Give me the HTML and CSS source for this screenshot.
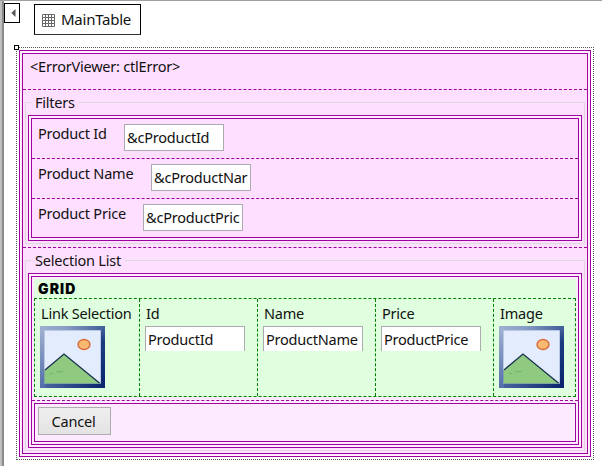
FILE: index.html
```html
<!DOCTYPE html>
<html lang="en">
<head>
<meta charset="utf-8">
<title>MainTable</title>
<link rel="stylesheet" href="styles.css">
</head>
<body>
<svg class="defs" width="0" height="0" aria-hidden="true">
  <defs>
    <linearGradient id="frame" x1="0" y1="0" x2="1" y2="0"><stop offset="0" stop-color="#9eb0d0"/><stop offset=".4" stop-color="#8a9dc6"/><stop offset="1" stop-color="#3d5c98"/></linearGradient>
    <linearGradient id="side" x1="0" y1="0" x2="0" y2="1"><stop offset="0" stop-color="#9eb0d0"/><stop offset="1" stop-color="#536ea8"/></linearGradient>
    <linearGradient id="base" x1="0" y1="0" x2="1" y2="0"><stop offset="0" stop-color="#4e69a2"/><stop offset="1" stop-color="#07246c"/></linearGradient>
    <linearGradient id="right" x1="0" y1="0" x2="0" y2="1"><stop offset="0" stop-color="#3d5c98"/><stop offset=".2" stop-color="#1c3c82"/><stop offset="1" stop-color="#07246c"/></linearGradient>
    <symbol id="picture" viewBox="0 0 65 62">
      <path fill="url(#frame)" d="M0 0h65v5H0z"/>
      <path fill="url(#right)" d="M60 4h5v58h-5z"/>
      <path fill="url(#base)" d="M0 57h65v5H0z"/>
      <path fill="url(#side)" d="M0 3h5v59H0z"/>
      <path fill="#e3ecfc" stroke="#b9c9e4" d="M4.500 4.500h56v53h-56z"/>
      <path fill="#8fca80" d="M5 44 24 28 60 57H5z"/>
      <path fill="none" stroke="#18304f" stroke-width="1.300" d="M5 44 24 28 60 57.500"/>
      <path fill="none" stroke="#7fa5a0" d="M4.500 44v13.500h55"/>
      <path fill="none" stroke="#76b767" stroke-width="1.200" d="m10 48 3-1m3-1 7-.6"/>
      <ellipse cx="44" cy="18.500" rx="6" ry="5" fill="#f9b971" stroke="#d96b3c" stroke-width="1.400"/>
    </symbol>
  </defs>
</svg>
<div class="editor">
  <header class="toolbar">
    <div class="collapse"><svg width="5" height="8" viewBox="0 0 5 8"><path fill="#555" d="M4.500 0v8L.3 4z"/></svg></div>
    <div class="tab">
      <svg width="13" height="13" viewBox="0 0 13 13"><path fill="none" stroke="#686868" d="M.5 .5h12v12H.5zM3.500 0v13M6.500 0v13M9.500 0v13M0 3.500h13M0 6.500h13M0 9.500h13"/></svg>
      <span>MainTable</span>
    </div>
  </header>
  <main class="selection">
    <i class="handle"></i>
    <div class="frame"><div class="table">
      <div class="error">&lt;ErrorViewer: ctlError&gt;</div>
      <section class="group filters">
        <div class="legend"><span>Filters</span></div>
        <div class="frame"><div class="table">
          <div class="field"><label class="w-id">Product Id</label><div class="input">&amp;cProductId</div></div>
          <div class="field"><label class="w-name">Product Name</label><div class="input">&amp;cProductNar</div></div>
          <div class="field"><label class="w-price">Product Price</label><div class="input">&amp;cProductPric</div></div>
        </div></div>
      </section>
      <section class="group list">
        <div class="legend"><span>Selection List</span></div>
        <div class="frame"><div class="table pale">
          <div class="gridwrap">
            <div class="gridtitle">GRID</div>
            <div class="grid">
              <div class="col first"><span class="head">Link Selection</span><svg class="pic" width="65" height="62"><use href="#picture"/></svg></div>
              <div class="col"><span class="head">Id</span><div class="input cut">ProductId</div></div>
              <div class="col"><span class="head">Name</span><div class="input cut">ProductName</div></div>
              <div class="col"><span class="head">Price</span><div class="input cut">ProductPrice</div></div>
              <div class="col"><span class="head">Image</span><svg class="pic" width="65" height="62"><use href="#picture"/></svg></div>
            </div>
          </div>
          <div class="actions"><div class="actionbox"><div class="button">Cancel</div></div></div>
        </div></div>
      </section>
    </div></div>
  </main>
</div>
</body>
</html>
```
FILE: styles.css
```css
* { box-sizing: border-box; }
body {
  margin: 0;
  background: #fff;
  color: #111;
  font: 14.500px/18px "Noto Sans", "Open Sans", sans-serif;
  letter-spacing: -0.22px;
  white-space: nowrap;
  overflow: hidden;
}
.defs { position: absolute; }
.editor {
  width: 602px;
  height: 466px;
  border-top: 1px solid #a0a0a0;
  background: linear-gradient(90deg, #c0bfbe 0 2px, #8c8a88 2px 4px, #fff 4px);
}
.toolbar { display: flex; align-items: flex-start; height: 46px; padding: 2px 0 0 4px; }
.collapse {
  display: flex; align-items: center; justify-content: center;
  width: 16px; height: 20px; border: 1px solid #000; padding-left: 2px;
}
.tab {
  display: flex; align-items: center; gap: 6px;
  width: 107px; height: 31px; margin: 1px 0 0 14px; padding: 0 0 2px 7px;
  border: 1px solid #000; border-bottom-color: #333;
  font-size: 15px; letter-spacing: -0.25px;
}
.tab svg { margin-top: 4px; }
.selection {
  position: relative;
  width: 578px; height: 413px; margin-left: 16px; padding: 2px;
  border: 1px dotted #555;
}
.handle {
  position: absolute; left: -3px; top: -3px;
  width: 5px; height: 5px; border: 1px solid #000; background: #fff;
}
.frame { border: 1px solid #a000a0; padding: 2px; background: #ffeffe; }
.table { border: 1px solid #a000a0; background: #ffdfff; }
.pale { background: #fdeaff; }
.error {
  height: 36px; padding: 3px 7px; border-bottom: 1px dashed #a000a0;
}
.group { position: relative; padding: 25px 5px 6px; height: 158px; border-bottom: 1px dashed #a000a0; }
.group::before {
  content: ""; position: absolute; inset: 12px 2px 3px; border: 1px solid #dfd8df;
}
.list { height: 205px; padding-bottom: 5px; border-bottom: 0; }
.list::before { bottom: 2px; }
.legend { position: absolute; left: 9px; top: 3px; padding: 0 3px; background: #ffdfff; }
.field { display: flex; height: 40px; padding: 5px 6px; border-bottom: 1px dashed #a000a0; }
.field:last-child { height: 38px; border-bottom: 0; }
.w-id { width: 86px; }
.w-name { width: 113px; }
.w-price { width: 105px; }
.input {
  width: 100px; height: 27px; padding: 3px 2px;
  border: 1px solid #aaaaaf; background: #fff; overflow: hidden;
}
.gridwrap { margin: 2px 2px 0; background: #dfffdf; }
.gridtitle {
  height: 19px; padding-left: 4px;
  font: 900 14px/20px "Inter", sans-serif; letter-spacing: 1.1px; color: #000;
}
.grid { display: flex; height: 99px; border: 1px dashed #008000; }
.col { width: 118px; padding: 5px 5px 0; border-right: 1px dashed #008000; }
.col:first-child { width: 105px; }
.col:last-child { width: auto; border-right: 0; }
.head { display: block; height: 22px; padding-left: 1px; }
.pic { display: block; }
.cut { height: 25px; border-bottom: 0; padding-top: 3px; }
.actions { margin-top: 3px; padding: 2px; border-top: 1px dashed #a000a0; }
.actionbox { height: 39px; padding: 3px; border: 1px solid #a000a0; }
.button {
  width: 73px; height: 28px; padding: 4px 2px 0 0; text-align: center;
  border: 1px solid #adadad; background: linear-gradient(#efefef, #e3e3e3);
}
```
